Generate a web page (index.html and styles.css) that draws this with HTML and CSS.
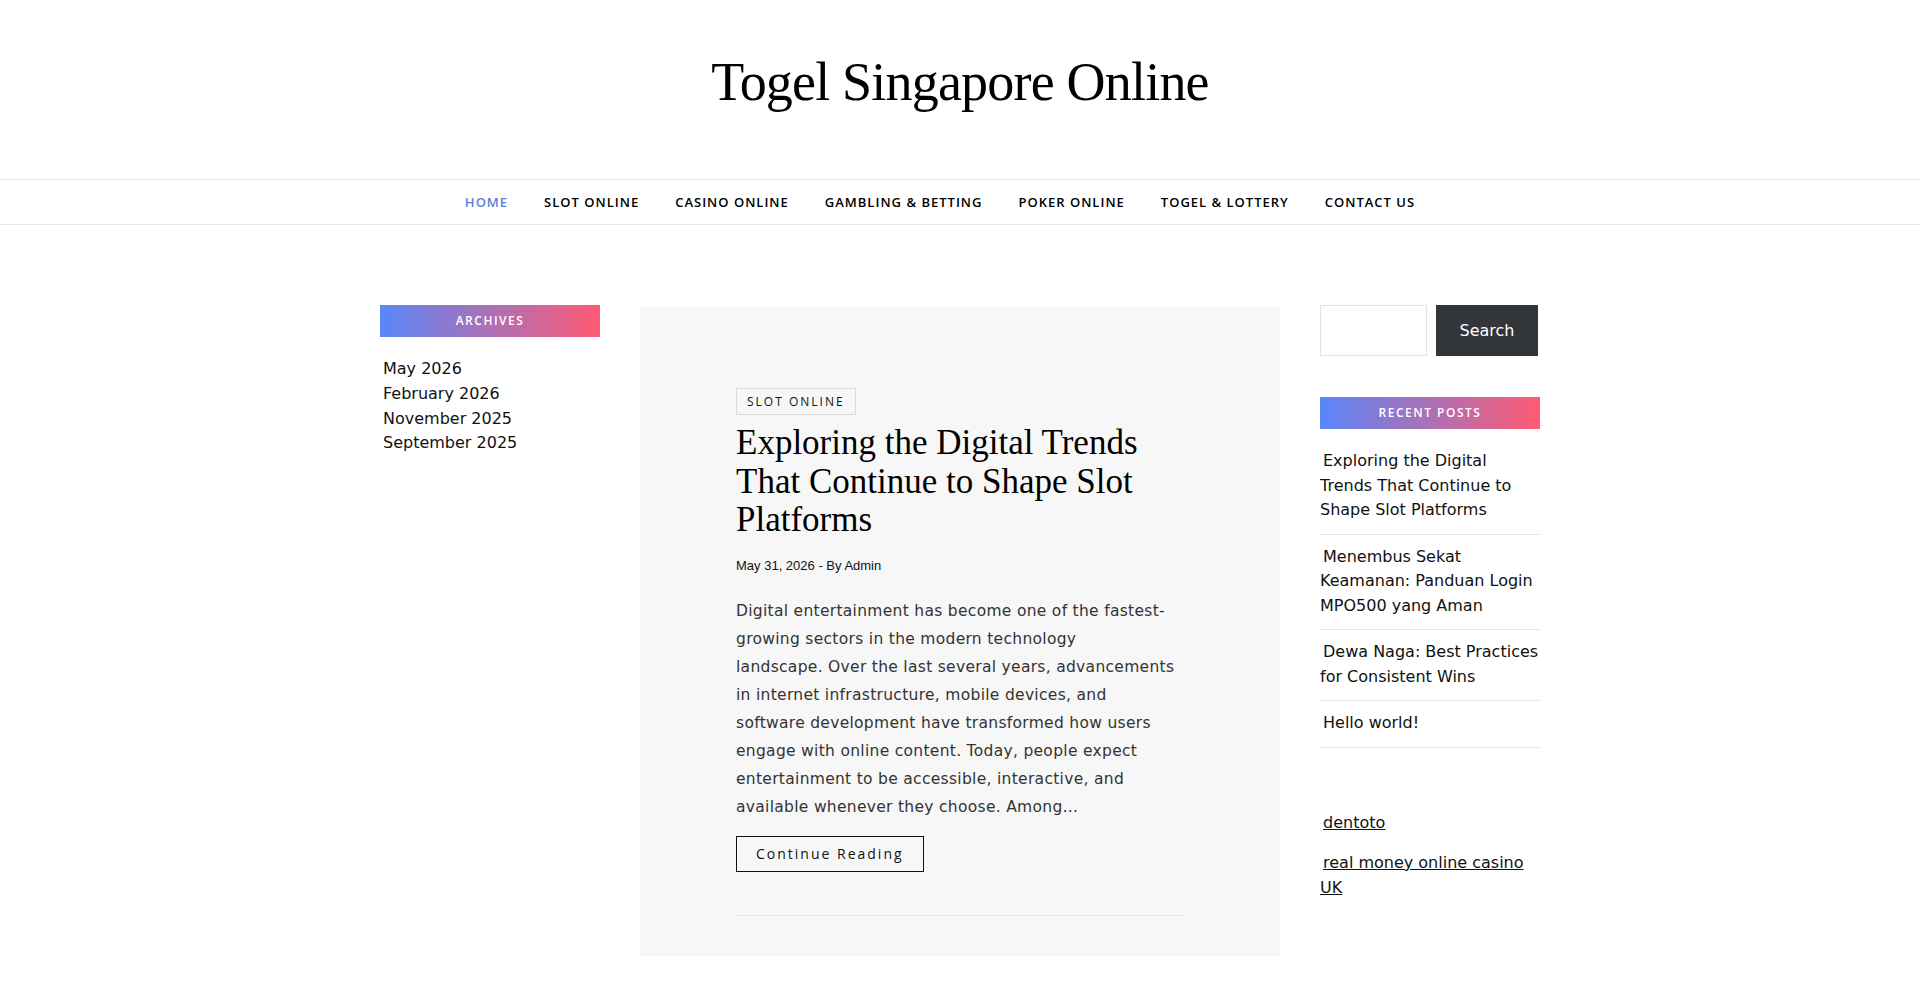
FILE: index.html
```html
<!DOCTYPE html>
<html lang="en">
<head>
<meta charset="utf-8">
<title>Togel Singapore Online</title>
<link rel="stylesheet" href="styles.css">
</head>
<body>
<header class="site-header">
  <h1 class="site-title"><a href="#">Togel Singapore Online</a></h1>
</header>
<nav class="main-nav">
  <ul class="menu">
    <li class="current"><a href="#">Home</a></li>
    <li><a href="#">Slot Online</a></li>
    <li><a href="#">Casino Online</a></li>
    <li><a href="#">Gambling &amp; Betting</a></li>
    <li><a href="#">Poker Online</a></li>
    <li><a href="#">Togel &amp; Lottery</a></li>
    <li><a href="#">Contact Us</a></li>
  </ul>
</nav>
<div class="site-content">
  <aside class="sidebar sidebar-left">
    <section class="widget">
      <h2 class="widget-title">Archives</h2>
      <ul class="archive-list">
        <li><a href="#">May 2026</a></li>
        <li><a href="#">February 2026</a></li>
        <li><a href="#">November 2025</a></li>
        <li><a href="#">September 2025</a></li>
      </ul>
    </section>
  </aside>
  <main class="content">
    <article class="post-card">
      <div class="post-cats"><a class="cat-badge" href="#">Slot Online</a></div>
      <h2 class="post-title"><a href="#">Exploring the Digital Trends That Continue to Shape Slot Platforms</a></h2>
      <div class="post-meta">May 31, 2026 - By Admin</div>
      <p class="post-excerpt">Digital entertainment has become one of the fastest-<br>growing sectors in the modern technology<br>landscape. Over the last several years, advancements<br>in internet infrastructure, mobile devices, and<br>software development have transformed how users<br>engage with online content. Today, people expect<br>entertainment to be accessible, interactive, and<br>available whenever they choose. Among…</p>
      <div class="read-more-wrap"><a class="read-more" href="#">Continue Reading</a></div>
      <hr class="post-sep">
    </article>
  </main>
  <aside class="sidebar sidebar-right">
    <form class="search-form">
      <input class="search-field" type="search" aria-label="Search">
      <button class="search-submit" type="button">Search</button>
    </form>
    <section class="widget widget-recent">
      <h2 class="widget-title">Recent Posts</h2>
      <ul class="recent-list">
        <li><a href="#">Exploring the Digital Trends That Continue to Shape Slot Platforms</a></li>
        <li><a href="#">Menembus Sekat Keamanan: Panduan Login MPO500 yang Aman</a></li>
        <li><a href="#">Dewa Naga: Best Practices for Consistent Wins</a></li>
        <li><a href="#">Hello world!</a></li>
      </ul>
    </section>
    <section class="widget widget-links">
      <ul class="link-list">
        <li><a href="#">dentoto</a></li>
        <li><a href="#">real money online casino UK</a></li>
      </ul>
    </section>
  </aside>
</div>
</body>
</html>
```
FILE: styles.css
```css
body {
  margin: 0;
  background: #fff;
  color: #222;
  font-family: "DejaVu Sans", sans-serif;
}
a {
  color: inherit;
  text-decoration: none;
}
.site-header {
  padding: 50px 0 65px;
  text-align: center;
}
.site-title {
  margin: 0;
  font-family: "Liberation Serif", serif;
  font-weight: 400;
  font-size: 54px;
  line-height: 64px;
  letter-spacing: -0.8px;
  color: #000;
}
.main-nav {
  border-top: 1px solid #e6e6e6;
  border-bottom: 1px solid #e6e6e6;
}
.menu {
  list-style: none;
  margin: 0;
  padding: 0 4px 0 0;
  display: flex;
  justify-content: center;
}
.menu li {
  margin-right: 36px;
}
.menu a {
  display: block;
  font-family: "Open Sans", sans-serif;
  font-weight: 600;
  font-size: 13px;
  letter-spacing: 1px;
  text-transform: uppercase;
  line-height: 44px;
  color: #000;
}
.menu .current a {
  color: #5a82dc;
}
.site-content {
  width: 1160px;
  margin: 0 auto;
  padding-top: 80px;
  display: flex;
  gap: 40px;
  align-items: flex-start;
}
.sidebar {
  width: 220px;
  flex: none;
}
.widget-title {
  margin: 0;
  height: 32px;
  line-height: 32px;
  background: linear-gradient(90deg, #5a86f9, #ff5a72);
  color: #fff;
  text-align: center;
  font-family: "Open Sans", sans-serif;
  font-weight: 600;
  font-size: 12px;
  letter-spacing: 1.5px;
  text-transform: uppercase;
}
.archive-list {
  list-style: none;
  margin: 20px 0 0;
  padding: 0;
  font-size: 16px;
  line-height: 24.8px;
  color: #111;
}
.archive-list li {
  text-indent: 3px;
}
.content {
  width: 640px;
  flex: none;
  margin-top: 2px;
}
.post-card {
  background: #f7f7f7;
  padding: 81px 96px 40px;
}
.post-cats {
  display: flex;
}
.cat-badge {
  display: block;
  border: 1px solid #dcdcdc;
  padding: 0 10px;
  font-family: "Open Sans", sans-serif;
  font-size: 12px;
  letter-spacing: 2px;
  line-height: 25px;
  text-transform: uppercase;
  color: #111;
}
.post-title {
  margin: 9px 0 0;
  font-family: "Liberation Serif", serif;
  font-weight: 400;
  font-size: 35px;
  line-height: 38.5px;
  color: #000;
}
.post-meta {
  margin-top: 16px;
  font-family: "Liberation Sans", sans-serif;
  font-size: 13px;
  line-height: 20px;
  color: #111;
}
.post-excerpt {
  margin: 21px 0 0;
  font-size: 15.5px;
  letter-spacing: 0.3px;
  line-height: 28px;
  color: #333;
}
.read-more-wrap {
  display: flex;
  margin-top: 15px;
}
.read-more {
  display: block;
  border: 1px solid #111;
  padding: 0 19px;
  line-height: 34px;
  font-family: "Open Sans", sans-serif;
  font-size: 14px;
  letter-spacing: 2px;
  color: #111;
}
.post-sep {
  margin: 43px 0 0;
  border: 0;
  border-top: 1px solid #e5e5e5;
  height: 0;
}
.search-form {
  display: flex;
  gap: 9px;
}
.search-field {
  width: 107px;
  height: 51px;
  box-sizing: border-box;
  border: 1px solid #e3e3e3;
  background: #fff;
  padding: 0 10px;
  margin: 0;
}
.search-submit {
  width: 102px;
  height: 51px;
  border: 0;
  margin: 0;
  background: #32353a;
  color: #fff;
  font-family: "DejaVu Sans", sans-serif;
  font-size: 16px;
}
.widget-recent {
  margin-top: 41px;
}
.recent-list {
  list-style: none;
  margin: 10px 0 0;
  padding: 0;
  font-size: 16px;
  line-height: 24.5px;
  color: #111;
}
.recent-list li {
  padding: 10px 0 11px;
  border-bottom: 1px solid #e6e6e6;
  text-indent: 3px;
}
.widget-links {
  margin-top: 63px;
}
.link-list {
  list-style: none;
  margin: 0;
  padding: 0;
  font-size: 16px;
  line-height: 24.5px;
  color: #111;
}
.link-list li {
  text-indent: 3px;
}
.link-list li + li {
  margin-top: 16px;
}
.link-list a {
  text-decoration: underline;
}
```
